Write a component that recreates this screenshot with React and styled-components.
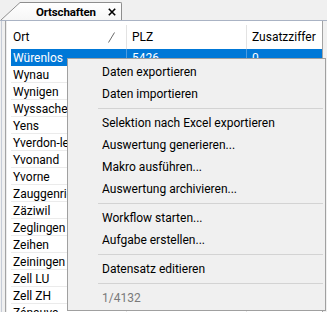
import React from "react";
import styled, { createGlobalStyle } from "styled-components";

const Global = createGlobalStyle`
  html, body { margin: 0; padding: 0; background: #f0f0f0; }
  body {
    font-family: Roboto, "Liberation Sans", sans-serif;
    font-size: 12px;
    color: #000;
  }
  #root { width: 327px; height: 312px; }
`;

const Window = styled.div`
  position: relative;
  width: 327px;
  height: 312px;
  overflow: hidden;
  background: #f0f0f0;
  display: flex;
  flex-direction: column;
`;

const TabStrip = styled.div`
  flex: none;
  height: 21px;
  box-sizing: border-box;
  display: flex;
  align-items: flex-end;
  padding-left: 1px;
  border-bottom: 1px solid #aab3c4;
`;

const Tab = styled.div`
  display: flex;
  height: 18px;
`;

const TabSlant = styled.svg`
  display: block;
  flex: none;
`;

const TabBody = styled.div`
  display: flex;
  align-items: center;
  gap: 12px;
  height: 18px;
  box-sizing: border-box;
  padding: 0 5px 0 16px;
  border-top: 1px solid #8e8e8e;
  border-right: 1px solid #8e8e8e;
  border-top-right-radius: 2px;
  background: linear-gradient(#ffffff, #f6f6f6);
`;

const TabTitle = styled.span`
  font-weight: 700;
  font-size: 11.5px;
  letter-spacing: -0.15px;
  line-height: 14px;
  white-space: nowrap;
`;

const CloseIcon = styled.svg`
  display: block;
  flex: none;
`;

const Content = styled.div`
  flex: 1;
  min-height: 0;
  display: flex;
  padding-left: 1px;
`;

const Panel = styled.div`
  flex: 1;
  min-width: 0;
  display: flex;
  border-left: 1px solid #c6ccd7;
  padding: 0 4px 0 3px;
`;

const Frame = styled.div`
  flex: 1;
  min-width: 0;
  background: #fff;
  border-left: 1px solid #a3a3a3;
  border-right: 1px solid #a3a3a3;
  box-shadow: inset 1px 0 0 #ececec;
  padding-left: 5px;
  display: flex;
  flex-direction: column;
  overflow: hidden;
`;

const Grid = styled.div`
  display: grid;
  grid-template-columns: 116px 120px 1fr;
`;

const HeaderRow = styled(Grid)`
  height: 28px;
  flex: none;
`;

const HeaderCell = styled.div`
  position: relative;
  display: flex;
  align-items: center;
  justify-content: space-between;
  padding: 4px 12px 0 ${(p) => (p.$first ? "2px" : "5px")};
  line-height: 15px;
  white-space: nowrap;
  &::after {
    content: "";
    display: ${(p) => (p.$last ? "none" : "block")};
    position: absolute;
    right: 0;
    top: 4px;
    bottom: 0;
    width: 1px;
    background: #e3e3e3;
  }
`;

const SortMark = styled.svg`
  display: block;
  margin-top: 1px;
`;

const Row = styled(Grid)`
  height: 17px;
  flex: none;
  box-sizing: border-box;
  border-bottom: 1px solid ${(p) => (p.$selected ? "#0078d7" : "#ebebeb")};
  background: ${(p) => (p.$selected ? "#0078d7" : "#fff")};
  color: ${(p) => (p.$selected ? "#fff" : "#000")};
`;

const Cell = styled.div`
  height: 16px;
  padding-left: ${(p) => (p.$first ? "2px" : "5px")};
  line-height: 19px;
  white-space: nowrap;
  border-right: 1px solid
    ${(p) => (p.$last ? "transparent" : p.$selected ? "#4c9be0" : "#e6e6e6")};
`;

const Menu = styled.div`
  position: absolute;
  left: 67px;
  top: 58px;
  width: 259px;
  box-sizing: border-box;
  background: #f0f0f0;
  border: 1px solid #a0a0a0;
  padding: 2px 0 1px;
  display: flex;
  flex-direction: column;
`;

const MenuItem = styled.div`
  height: 22px;
  display: flex;
  align-items: center;
  padding-left: 34px;
  white-space: nowrap;
  color: ${(p) => (p.$disabled ? "#7a7a7a" : "#000")};
`;

const Separator = styled.div`
  height: 7px;
  display: flex;
  align-items: center;
  margin: 0 2px 0 30px;
  &::before {
    content: "";
    flex: 1;
    height: 1px;
    background: #d3d3d3;
  }
`;

/* Only the first row's PLZ / Zusatzziffer are visible; the menu hides the rest. */
const rows = [
  ["Würenlos", "5426", "0"],
  ["Wynau", "", ""],
  ["Wynigen", "", ""],
  ["Wyssachen", "", ""],
  ["Yens", "", ""],
  ["Yverdon-les-Bains", "", ""],
  ["Yvonand", "", ""],
  ["Yvorne", "", ""],
  ["Zauggenried", "", ""],
  ["Zäziwil", "", ""],
  ["Zeglingen", "", ""],
  ["Zeihen", "", ""],
  ["Zeiningen", "", ""],
  ["Zell LU", "", ""],
  ["Zell ZH", "", ""],
  ["Zénauva", "", ""],
];

const menu = [
  { t: "Daten exportieren" },
  { t: "Daten importieren" },
  { sep: true },
  { t: "Selektion nach Excel exportieren" },
  { t: "Auswertung generieren..." },
  { t: "Makro ausführen..." },
  { t: "Auswertung archivieren..." },
  { sep: true },
  { t: "Workflow starten..." },
  { t: "Aufgabe erstellen..." },
  { sep: true },
  { t: "Datensatz editieren" },
  { sep: true },
  { t: "1/4132", disabled: true },
];

export default function App() {
  return (
    <>
      <Global />
      <Window>
        <TabStrip>
          <Tab>
            <TabSlant width="19" height="18" viewBox="0 0 19 18">
              <defs>
                <linearGradient id="tabfill" x1="0" y1="0" x2="0" y2="1">
                  <stop offset="0" stopColor="#ffffff" />
                  <stop offset="1" stopColor="#f6f6f6" />
                </linearGradient>
              </defs>
              <polygon points="0,18 19,0 19,18" fill="url(#tabfill)" />
              <line x1="0" y1="18" x2="19" y2="0.5" stroke="#8e8e8e" strokeWidth="1" />
            </TabSlant>
            <TabBody>
              <TabTitle>Ortschaften</TabTitle>
              <CloseIcon width="8" height="8" viewBox="0 0 8 8">
                <path d="M0.8 0.8 L7.2 7.2 M7.2 0.8 L0.8 7.2" stroke="#000" strokeWidth="1.6" />
              </CloseIcon>
            </TabBody>
          </Tab>
        </TabStrip>
        <Content>
          <Panel>
            <Frame>
              <HeaderRow>
                <HeaderCell $first>
                  <span>Ort</span>
                  <SortMark width="7" height="11" viewBox="0 0 7 11">
                    <line x1="0.5" y1="10.5" x2="6.5" y2="0.5" stroke="#6a6a6a" strokeWidth="1" />
                  </SortMark>
                </HeaderCell>
                <HeaderCell>PLZ</HeaderCell>
                <HeaderCell $last>Zusatzziffer</HeaderCell>
              </HeaderRow>
              {rows.map((r, i) => (
                <Row key={r[0]} $selected={i === 0}>
                  <Cell $first $selected={i === 0}>{r[0]}</Cell>
                  <Cell $selected={i === 0}>{r[1]}</Cell>
                  <Cell $last $selected={i === 0}>{r[2]}</Cell>
                </Row>
              ))}
            </Frame>
          </Panel>
        </Content>
        <Menu>
          {menu.map((m, i) =>
            m.sep ? (
              <Separator key={i} />
            ) : (
              <MenuItem key={i} $disabled={m.disabled}>
                {m.t}
              </MenuItem>
            )
          )}
        </Menu>
      </Window>
    </>
  );
}
